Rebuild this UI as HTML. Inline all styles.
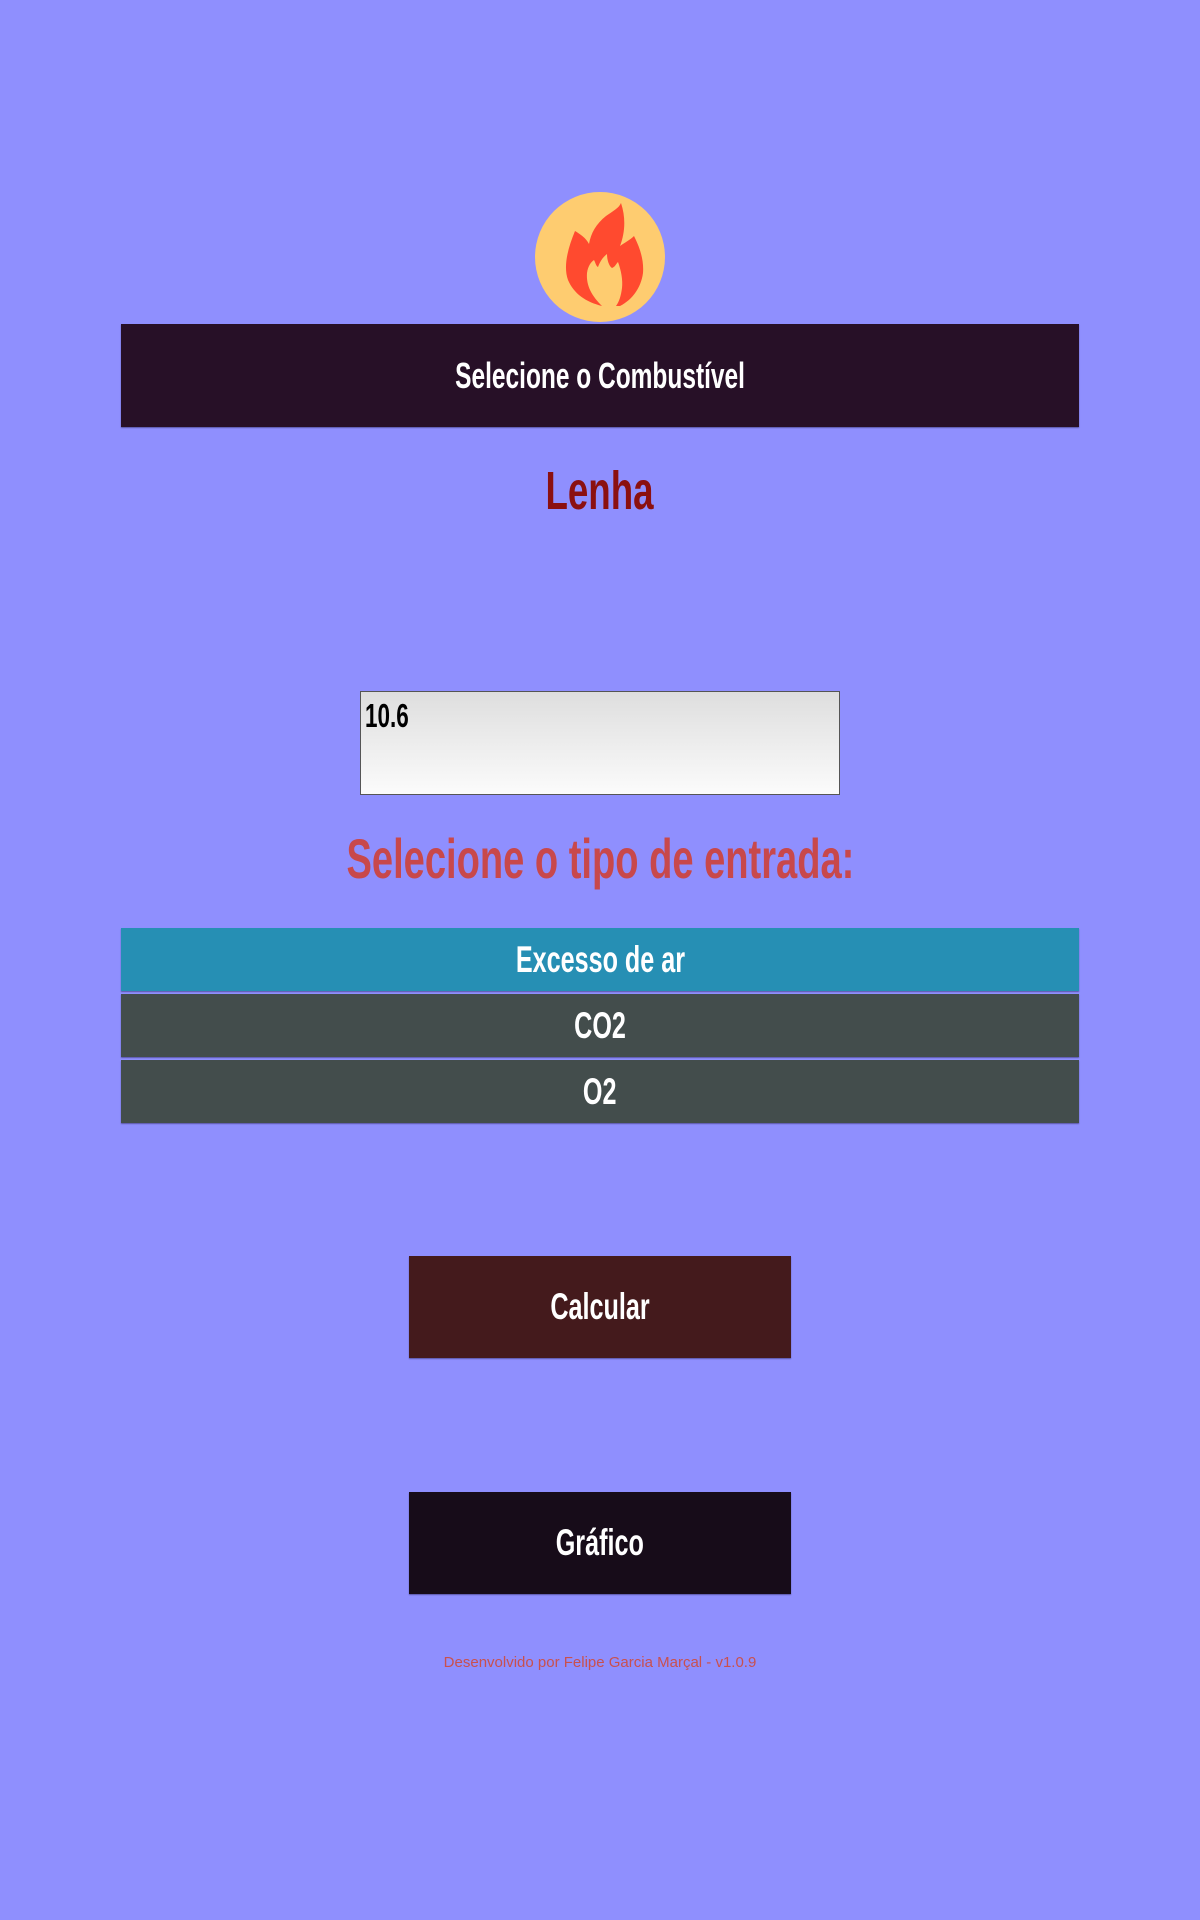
<!DOCTYPE html>
<html><head><meta charset="utf-8"><style>
html,body{margin:0;padding:0}
body{width:1200px;height:1920px;background:#8f8ffe;position:relative;overflow:hidden;font-family:"Liberation Sans",sans-serif}
.abs{position:absolute}
.bar{position:absolute;display:flex;align-items:center;justify-content:center;color:#fff;box-shadow:0 1px 1px rgba(40,30,80,.5)}
.c{display:inline-block;font-weight:bold;transform:scaleX(.68);white-space:nowrap}
</style></head><body>
<svg class="abs" style="left:530px;top:190px" width="140" height="140" viewBox="0 0 140 140">
<circle cx="70" cy="67" r="65" fill="#fecc70"/>
<g transform="translate(4,-2)">
<path fill="#ff4a2f" d="M87 15 C92 30 91 45 86 58 C90 55 96 52 100 48 C106 60 110 72 109 85 C107 100 98 112 86 118 L68 118 C52 114 40 106 34 92 C29 78 34 60 41 43 C46 46 52 50 55 56 C57 45 62 36 72 28 C79 23 85 20 87 15 Z"/>
<path fill="#fecc70" d="M68 118 C58 108 52 98 53 85 C54 78 57 74 60 72 C62 76 62 78 64 79 C66 74 68 70 73 66 C73 72 75 78 78 80 C81 79 82 76 84 74 C87 82 89 92 88 100 C87 108 85 114 82 118 Z"/>
</g>
</svg>
<div class="bar" style="left:121px;top:324px;width:958px;height:103px;background:#271027"><span class="c" style="font-size:36px">Selecione o Combustível</span></div>
<div class="abs" style="left:0;width:1200px;top:460px;text-align:center;color:#8b1010"><span class="c" style="font-size:54px">Lenha</span></div>
<div class="abs" style="left:360px;top:691px;width:478px;height:102px;border:1px solid #555;background:linear-gradient(#dedede,#fbfbfb)"></div>
<div class="abs" style="left:365px;top:697px;color:#000;"><span class="c" style="font-size:33px;transform-origin:left">10.6</span></div>
<div class="abs" style="left:0;width:1200px;top:826px;text-align:center;color:#c8484b"><span class="c" style="font-size:56px">Selecione o tipo de entrada:</span></div>
<div class="bar" style="left:121px;top:928px;width:958px;height:63px;background:#268fb4"><span class="c" style="font-size:37px">Excesso de ar</span></div>
<div class="bar" style="left:121px;top:994px;width:958px;height:63px;background:#434d4c"><span class="c" style="font-size:37px">CO2</span></div>
<div class="bar" style="left:121px;top:1060px;width:958px;height:63px;background:#434d4c"><span class="c" style="font-size:37px">O2</span></div>
<div class="bar" style="left:409px;top:1256px;width:382px;height:102px;background:#441a1c"><span class="c" style="font-size:37px">Calcular</span></div>
<div class="bar" style="left:409px;top:1492px;width:382px;height:102px;background:#170c19"><span class="c" style="font-size:37px">Gráfico</span></div>
<div class="abs" style="left:0;width:1200px;top:1654px;text-align:center;color:#c9504e;font-size:15px">Desenvolvido por Felipe Garcia Marçal - v1.0.9</div>
</body></html>
